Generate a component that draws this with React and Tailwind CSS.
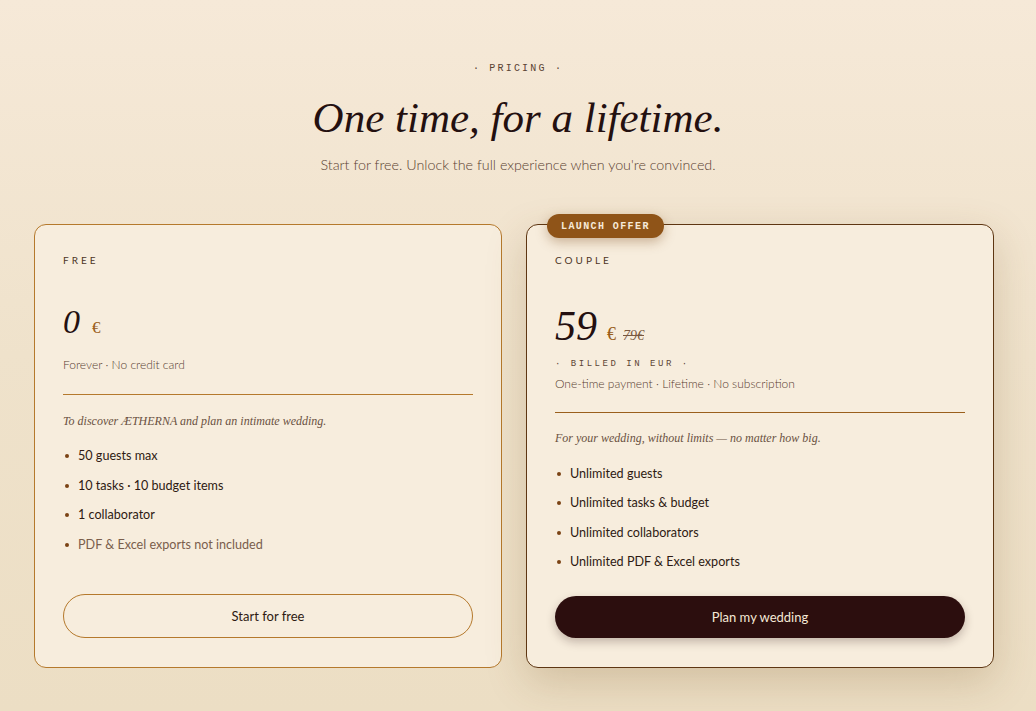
import React from "react";

const sans = { fontFamily: "Lato, 'Open Sans', sans-serif" };
const serif = { fontFamily: "'Liberation Serif', 'DejaVu Serif', serif" };
const mono = { fontFamily: "'Liberation Mono', 'DejaVu Sans Mono', monospace" };

function Feature({ children, muted }) {
  return (
    <li className="flex items-center gap-[9px]">
      <span className="w-[4px] h-[4px] rounded-full bg-[#7a4214] ml-[2px]" />
      <span className={muted ? "text-[#7a5e4c]" : "text-[#2e1a12]"}>{children}</span>
    </li>
  );
}

export default function App() {
  return (
    <div
      className="w-[1036px] h-[711px] overflow-hidden bg-gradient-to-b from-[#f6e9d8] via-[#efe2cb] to-[#ecdec4]"
      style={sans}
    >
      <header className="flex flex-col items-center pt-[61px]">
        <p className="text-[10px] tracking-[0.22em] text-[#5a4233]" style={mono}>
          · PRICING ·
        </p>
        <h1 className="mt-[17px] text-[43px] leading-[50px] italic text-[#241010]" style={serif}>
          One time, for a lifetime.
        </h1>
        <p className="mt-[11px] text-[14.3px] font-light text-[#5a4131]">
          Start for free. Unlock the full experience when you're convinced.
        </p>
      </header>

      <main className="grid grid-cols-2 gap-[24px] w-[960px] ml-[34px] mt-[49px]">
        {/* Free plan */}
        <section className="flex flex-col h-[444px] rounded-[12px] border border-[#b5792c] bg-[#f7eddd] px-[28px] pt-[28px] pb-[29px]">
          <p className="text-[10px] tracking-[0.3em] text-[#4e3526]">FREE</p>
          <div className="mt-[34px] flex items-baseline gap-[12px]">
            <span className="text-[34px] leading-[40px] italic text-[#241010]" style={serif}>0</span>
            <span className="text-[17px] text-[#9a5f1c]" style={serif}>€</span>
          </div>
          <p className="mt-[14px] text-[12px] font-light text-[#574031]">Forever · No credit card</p>
          <div className="mt-[20px] h-px bg-[#b5792c]" />
          <p className="mt-[17px] text-[12px] italic text-[#6a5141]" style={serif}>
            To discover ÆTHERNA and plan an intimate wedding.
          </p>
          <ul className="mt-[17px] flex flex-col gap-[12px] text-[12.6px] leading-[17.5px]">
            <Feature>50 guests max</Feature>
            <Feature>10 tasks · 10 budget items</Feature>
            <Feature>1 collaborator</Feature>
            <Feature muted>PDF &amp; Excel exports not included</Feature>
          </ul>
          <button className="mt-auto h-[44px] w-full rounded-full border border-[#b5792c] text-[13px] text-[#2e1a12]">
            Start for free
          </button>
        </section>

        {/* Couple plan */}
        <section className="relative flex flex-col h-[444px] rounded-[12px] border border-[#5e3612] bg-[#f7eddd] px-[28px] pt-[28px] pb-[29px] shadow-[0_14px_40px_rgba(120,80,30,0.22)]">
          <span
            className="absolute left-[20px] top-[-11px] h-[24px] px-[14px] flex items-center rounded-full bg-[#8f5418] text-[10px] font-bold tracking-[0.14em] text-[#f7ead8] shadow-[0_4px_12px_rgba(120,70,20,0.35)]"
            style={mono}
          >
            LAUNCH OFFER
          </span>
          <p className="text-[10px] tracking-[0.3em] text-[#4e3526]">COUPLE</p>
          <div className="mt-[34px] flex items-baseline">
            <span className="text-[42px] leading-[48px] italic text-[#241010]" style={serif}>59</span>
            <span className="ml-[10px] text-[18px] text-[#9a5f1c]" style={serif}>€</span>
            <span className="ml-[7px] text-[14px] italic line-through text-[#7a5840]" style={serif}>79€</span>
          </div>
          <p className="mt-[8px] text-[9px] tracking-[0.28em] text-[#5e4636]" style={mono}>
            · BILLED IN EUR ·
          </p>
          <p className="mt-[3px] text-[12px] font-light text-[#574031]">
            One-time payment · Lifetime · No subscription
          </p>
          <div className="mt-[19px] h-px bg-[#9a5f1c]" />
          <p className="mt-[16px] text-[12px] italic text-[#6a5141]" style={serif}>
            For your wedding, without limits — no matter how big.
          </p>
          <ul className="mt-[18px] flex flex-col gap-[12px] text-[12.6px] leading-[17.5px]">
            <Feature>Unlimited guests</Feature>
            <Feature>Unlimited tasks &amp; budget</Feature>
            <Feature>Unlimited collaborators</Feature>
            <Feature>Unlimited PDF &amp; Excel exports</Feature>
          </ul>
          <button className="mt-auto h-[42px] w-full rounded-full bg-[#2c0e0e] text-[13px] text-[#f5e8d6] shadow-[0_4px_10px_rgba(44,14,14,0.25)]">
            Plan my wedding
          </button>
        </section>
      </main>
    </div>
  );
}
